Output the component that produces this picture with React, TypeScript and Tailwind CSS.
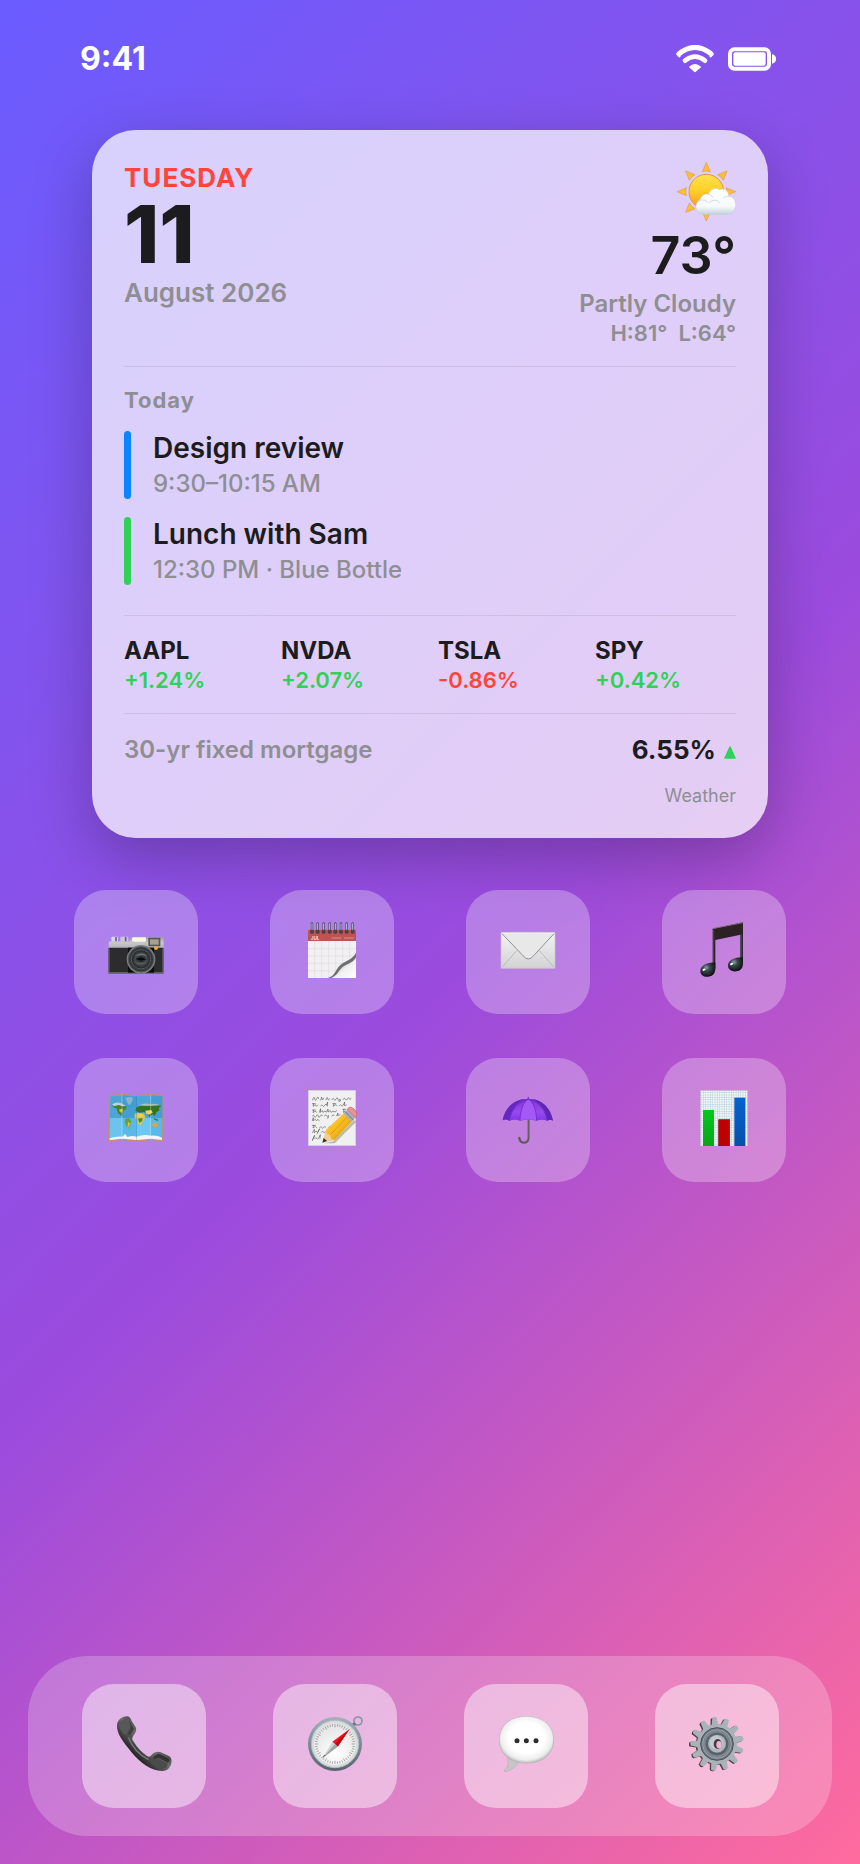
import React from 'react';

interface CalendarEvent {
  title: string;
  detail: string;
  bar: string;
}

interface Stock {
  symbol: string;
  change: string;
}

interface AppShortcut {
  name: string;
  icon: React.ReactNode;
}

const EVENTS: CalendarEvent[] = [
  { title: 'Design review', detail: '9:30–10:15 AM', bar: 'bg-[#0a84ff]' },
  { title: 'Lunch with Sam', detail: '12:30 PM · Blue Bottle', bar: 'bg-[#30d158]' },
];

const STOCKS: Stock[] = [
  { symbol: 'AAPL', change: '+1.24%' },
  { symbol: 'NVDA', change: '+2.07%' },
  { symbol: 'TSLA', change: '-0.86%' },
  { symbol: 'SPY', change: '+0.42%' },
];

const WifiIcon = () => (
  <svg viewBox="0 0 114 84" className="h-7 w-[38px]" fill="none" stroke="#fff" aria-hidden="true">
    <path d="M7 28 Q57 -14 107 28" strokeWidth="15" strokeLinecap="butt" />
    <path d="M4 27 L10 34 M110 27 L104 34" strokeWidth="7" strokeLinecap="round" />
    <path d="M27 47 Q57 23 87 47" strokeWidth="14" strokeLinecap="round" />
    <path d="M57 81 L40 66 Q57 51 74 66 Z" fill="#fff" strokeWidth="3" strokeLinejoin="round" />
  </svg>
);

const BatteryIcon = () => (
  <svg viewBox="0 0 144 72" className="h-6 w-12" aria-hidden="true">
    <rect x="6" y="7" width="117" height="58" rx="13" fill="none" stroke="#fff" strokeWidth="12" />
    <rect x="16" y="16" width="97" height="40" rx="6" fill="#fff" />
    <path d="M132 22 Q144 24 144 36 Q144 48 132 50 Z" fill="#fff" />
  </svg>
);

const PartlyCloudyIcon = () => (
  <svg viewBox="0 0 180 180" className="size-[60px]" aria-hidden="true">
    <defs>
      <linearGradient id="sunBody" x1="0" y1="0" x2="0" y2="1">
        <stop offset="0" stopColor="#ffe24a" />
        <stop offset="0.45" stopColor="#ffd02c" />
        <stop offset="1" stopColor="#f89a1d" />
      </linearGradient>
      <linearGradient id="cloudBody" x1="0" y1="0" x2="0" y2="1">
        <stop offset="0" stopColor="#ffffff" />
        <stop offset="0.7" stopColor="#f6f9fb" />
        <stop offset="1" stopColor="#c4d1da" />
      </linearGradient>
    </defs>
    {[0, 45, 90, 135, 180, 225, 270, 315].map((angle) => (
      <path
        key={angle}
        d="M91 1 L103 29 Q91 25 79 29 Z"
        fill="#fcc02f"
        stroke="#e29a50"
        strokeWidth="2"
        strokeLinejoin="round"
        transform={`rotate(${angle} 91 89)`}
      />
    ))}
    <circle cx="91" cy="89" r="52" fill="url(#sunBody)" stroke="#e9953d" strokeWidth="3" />
    <path
      d="M84 157 C57 157 52 124 72 113 C76 99 88 94 98 97 C102 80 120 75 131 83 C144 77 159 87 158 103 C174 104 181 119 179 133 C177 149 166 157 152 157 Z"
      fill="url(#cloudBody)"
      stroke="#b9c8d2"
      strokeWidth="1.5"
    />
    <path
      d="M66 119 C74 111 88 112 94 121 M100 122 C110 111 126 113 130 122 M98 97 C104 97 108 101 110 106 M142 108 C148 103 154 102 158 103"
      fill="none"
      stroke="#cfdae2"
      strokeWidth="3"
      strokeLinecap="round"
    />
  </svg>
);

const CameraIcon = () => (
  <svg viewBox="0 0 168 168" className="size-14" aria-hidden="true">
    <defs>
      <linearGradient id="cameraPlate" x1="0" y1="0" x2="0" y2="1">
        <stop offset="0" stopColor="#9a9ba2" />
        <stop offset="0.5" stopColor="#c9c9cc" />
        <stop offset="1" stopColor="#b0b0b4" />
      </linearGradient>
      <radialGradient id="cameraLens">
        <stop offset="0" stopColor="#17191b" />
        <stop offset="0.6" stopColor="#454a4e" />
        <stop offset="1" stopColor="#1c1e20" />
      </radialGradient>
    </defs>
    <rect x="10" y="44" width="20" height="18" rx="3" fill="#d8d8e6" />
    <rect x="37" y="44" width="24" height="18" rx="3" fill="#c9c9d8" />
    <path d="M24 45 V60 M53 45 V60" stroke="#6a5a9c" strokeWidth="5" />
    <path d="M2 62 Q2 58 7 58 H64 L70 44 H164 Q167 44 167 48 V80 H2 Z" fill="url(#cameraPlate)" />
    <rect x="1" y="77" width="166" height="78" rx="4" fill="#2c2c2f" />
    <path d="M3 80 V153 M165 80 V153" stroke="#77777c" strokeWidth="3" />
    <path d="M4 153 H164" stroke="#8f8f96" strokeWidth="3" />
    <rect x="60" y="77" width="78" height="75" fill="#0c0c0e" />
    <rect x="72" y="46" width="42" height="13" rx="4" fill="#fbf6e2" />
    <rect x="121" y="47" width="36" height="26" rx="2" fill="#55555a" />
    <rect x="126" y="52" width="26" height="16" fill="#a7a095" />
    <circle cx="144" cy="78" r="6" fill="#ffa51c" />
    <circle cx="99" cy="112" r="43" fill="#7b7e82" />
    <circle cx="99" cy="112" r="38" fill="#34383b" stroke="#54585b" strokeWidth="3" />
    <circle cx="99" cy="112" r="29" fill="url(#cameraLens)" stroke="#565b5e" strokeWidth="3" />
    <path d="M79 103 Q99 87 119 102 Q100 97 79 103 Z" fill="#6c7376" />
    <path d="M76 119 Q98 137 121 118 Q100 125 76 119 Z" fill="#555c5f" />
    <path d="M83 111 Q100 103 115 112 Q100 118 83 111 Z" fill="#090a0b" />
  </svg>
);

const CalendarIcon = () => (
  <svg viewBox="0 0 168 168" className="size-14" aria-hidden="true">
    <defs>
      <linearGradient id="pageCurl" x1="0" y1="0" x2="1" y2="1">
        <stop offset="0.3" stopColor="#b5b5b6" />
        <stop offset="0.55" stopColor="#efefef" />
        <stop offset="1" stopColor="#ffffff" />
      </linearGradient>
      <linearGradient id="curlShadow" x1="0" y1="0" x2="1" y2="1">
        <stop offset="0.25" stopColor="#eceaec" />
        <stop offset="0.5" stopColor="#6f6f72" />
      </linearGradient>
    </defs>
    <rect x="12" y="22" width="144" height="146" fill="#f2f0f2" />
    <rect x="12" y="22" width="144" height="35" fill="#bd5453" />
    <text x="20" y="54" fontSize="14" fontWeight="700" fill="#f3dede">
      JUL
    </text>
    <path d="M82 48 H112 M120 48 H150" stroke="#c87472" strokeWidth="6" />
    <path
      d="M32 57 V168 M53 57 V168 M74 57 V168 M95 57 V168 M116 57 V140 M137 57 V120 M12 80 H156 M12 102 H150 M12 124 H128 M12 146 H112"
      stroke="#dfdce0"
      strokeWidth="2"
    />
    <path d="M72 168 C98 160 94 134 118 122 C140 112 150 104 156 92 V130 L110 168 Z" fill="url(#curlShadow)" />
    <path d="M82 168 C106 158 104 138 126 129 C143 122 151 116 156 106 V168 Z" fill="url(#pageCurl)" />
    {[24, 41, 59, 77, 94, 111, 128, 146].map((x) => (
      <g key={x}>
        <circle cx={x} cy="29" r="6" fill="#48303a" />
        <path d={`M${x} 4 V30`} stroke="#4a4658" strokeWidth="7" strokeLinecap="round" />
        <path d={`M${x} 5 V22`} stroke="#a9cdd6" strokeWidth="3" strokeLinecap="round" />
      </g>
    ))}
  </svg>
);

const MailIcon = () => (
  <svg viewBox="0 0 168 168" className="size-14" aria-hidden="true">
    <defs>
      <linearGradient id="envelope" x1="0" y1="0" x2="0" y2="1">
        <stop offset="0" stopColor="#f3f3f3" />
        <stop offset="1" stopColor="#d3d3d3" />
      </linearGradient>
    </defs>
    <rect x="3" y="31" width="162" height="108" rx="2" fill="url(#envelope)" stroke="#c9c5cd" strokeWidth="2" />
    <path d="M50 86 L6 136 M118 86 L162 136" stroke="#b4b4b4" strokeWidth="2.5" />
    <path
      d="M6 35 L69 101 Q85 121 101 101 L162 35"
      fill="#e8e8e8"
      stroke="#8b9199"
      strokeWidth="3"
      strokeLinejoin="round"
    />
  </svg>
);

const MusicIcon = () => (
  <svg viewBox="0 0 168 168" className="size-14" aria-hidden="true">
    <defs>
      <radialGradient id="noteHead" cx="0.4" cy="0.35" r="0.65">
        <stop offset="0" stopColor="#8d9ca4" />
        <stop offset="0.35" stopColor="#3d4a51" />
        <stop offset="1" stopColor="#0b0e10" />
      </radialGradient>
    </defs>
    <path d="M50 20 L141 1 V37 L58 54 V140 H50 Z" fill="#2c2226" />
    <path d="M133 36 H141 V124 H133 Z" fill="#22262a" />
    <path d="M50 20 L141 2" stroke="#777076" strokeWidth="3" />
    <path d="M53 24 V136 M137 38 V120" stroke="#4d575d" strokeWidth="2" />
    <path d="M58 122 C40 120 13 128 13 147 C13 161 28 168 42 163 C53 160 58 152 58 138 Z" fill="url(#noteHead)" />
    <path d="M141 106 C123 104 96 112 96 130 C96 145 111 151 125 147 C136 144 141 136 141 122 Z" fill="url(#noteHead)" />
    <ellipse cx="24" cy="143" rx="5" ry="3" fill="#fff" transform="rotate(-25 24 143)" />
    <ellipse cx="107" cy="126" rx="5" ry="3" fill="#fff" transform="rotate(-25 107 126)" />
  </svg>
);

const MapIcon = () => (
  <svg viewBox="0 0 168 168" className="size-14" aria-hidden="true">
    <path d="M2 15 L42 12 L85 15 L128 12 L168 15 L166 155 L128 151 L85 155 L42 151 L0 155 Z" fill="#c08f76" />
    <path d="M7 19 L42 16 L85 19 L128 16 L163 19 L162 150 L128 146 L85 150 L42 146 L5 150 Z" fill="#58b9ea" />
    <path d="M7 19 L42 16 V146 L5 150 Z" fill="#6cc4ee" />
    <path d="M85 19 L128 16 V146 L85 150 Z" fill="#6cc8f2" />
    <path d="M7 19 L42 16 L85 19 L128 16 L163 19 V84 H6 Z" fill="#2d84bd" opacity="0.5" />
    <path d="M5 145 Q24 138 42 140 L52 132 L58 141 Q74 136 85 140 Q108 132 128 137 Q148 135 162 143 V150 L128 146 L85 150 L42 146 L5 150 Z" fill="#f4f5f6" />
    <path d="M14 45 Q22 37 32 40 L46 44 L56 50 L52 58 L46 63 L42 74 L50 80 L38 76 L30 70 L26 56 L14 50 Z" fill="#44822c" />
    <path d="M12 43 Q26 34 40 40 L54 48 L44 49 L32 45 L18 49 Z" fill="#bfd0d6" />
    <path d="M34 56 L46 58 L42 68 L35 66 Z" fill="#c9bd48" />
    <path d="M52 24 Q66 18 75 23 L71 38 L64 46 L58 38 Z" fill="#8fb3cb" />
    <path d="M52 86 L62 84 L70 93 L66 105 L60 118 L55 108 L50 96 Z" fill="#6aa134" />
    <path d="M60 96 L67 100 L58 118 Z" fill="#e0c04c" />
    <path d="M86 52 Q100 44 118 48 Q140 40 160 48 L152 54 L155 60 L146 66 L140 78 L134 72 L124 80 L116 70 L108 66 L94 68 L82 62 Z" fill="#35741f" />
    <path d="M80 71 L92 68 L108 71 L112 82 L104 94 L98 107 L90 102 L90 88 L80 84 Z" fill="#dcc74b" />
    <path d="M90 86 L104 84 L102 94 L94 98 Z" fill="#4d8a31" />
    <path d="M112 62 L130 60 L134 68 L122 74 L114 70 Z M90 72 L106 74 L104 80 L88 80 Z" fill="#f0d25b" />
    <path d="M94 46 Q110 37 126 43 Q144 38 156 46 Q140 48 124 47 Q108 48 94 46 Z" fill="#a9c1b8" />
    <path d="M132 102 L142 96 L150 103 L146 113 L134 109 Z" fill="#d9a545" />
    <path d="M138 86 L150 91" stroke="#3f7a2b" strokeWidth="4" />
    <path d="M42 13 V150 M128 13 V150" stroke="#fff" strokeWidth="2" opacity="0.45" />
    <path d="M85 16 V152" stroke="#1f5f8a" strokeWidth="2" opacity="0.4" />
  </svg>
);

const NotesIcon = () => (
  <svg viewBox="0 0 168 168" className="size-14" aria-hidden="true">
    <defs>
      <linearGradient id="pencilBody" x1="0" y1="0" x2="1" y2="1">
        <stop offset="0" stopColor="#ffd83a" />
        <stop offset="0.55" stopColor="#f5b71d" />
        <stop offset="1" stopColor="#a8720d" />
      </linearGradient>
    </defs>
    <rect x="13" y="1" width="142" height="166" fill="#f0f0f0" stroke="#d4d0d4" strokeWidth="2" />
    <g fill="none" stroke="#4a4a4a" strokeWidth="1.7" strokeLinecap="round">
      <path d="M26 30 q4 -14 6 -4 t6 0 t6 0 M50 30 l3 -9 l2 9 l4 -5 M66 29 q3 -12 5 -3 t5 0 M84 29 q4 -8 6 -1 t6 -1 t6 1 t6 -1 q4 8 -2 8 M118 28 q3 -8 6 -1 t6 0 t6 -1 t5 -1" />
      <path d="M25 41 h9 m-5 0 l-2 8 l7 -5 l3 5 l4 -4 M50 48 q4 -7 6 -1 t6 -1 t5 0 l4 -10 l-1 12 M86 41 h9 m-5 0 l-2 8 l7 -5 l4 3 M106 47 q4 -6 6 -1 t6 -1 l4 -9 l-1 11 l6 -2" />
      <path d="M25 60 h9 m-5 0 l-2 8 l7 -5 l3 4 M46 67 l4 -11 l-1 11 l6 -5 l2 5 l6 -4 l4 4 l5 -10 l0 9 l7 -4 l3 5 l5 -4 l6 3 l5 -4 M116 58 h9 m-5 0 l-2 9 l6 -4" />
      <path d="M25 78 q4 -6 6 1 t6 -1 t6 0 t6 0 t6 -1 M62 78 q2 -7 5 -1 t6 -1 q3 9 -3 9 M84 78 q4 -8 6 -1 M98 77 l4 -8 l-1 8 l7 -3 M25 92 l3 -9 l0 9 l6 -4 l3 4 l5 -4 l3 4" />
      <path d="M25 106 h9 m-5 0 l-2 8 l7 -5 l4 4 M47 113 q4 -6 6 -1 t6 0 t6 -1 M74 112 q4 -7 6 -1 M26 128 l5 -10 l0 10 l5 -5 l5 4 l6 -11 l-8 16 M52 127 q4 -7 6 -1 t6 -1 M26 148 l6 -12 l-7 16 M32 146 q4 -7 6 -1 t6 -1 l5 -10 l-1 11" />
    </g>
    <path d="M60 160 L88 154 L150 90 L156 96 L92 160 Z" fill="#7c7660" opacity="0.45" />
    <path d="M55 158 L66 119 L92 150 Z" fill="#f0cf95" />
    <path d="M55 158 L59 144 L69 153 Z" fill="#2b2b2b" />
    <path d="M66 119 L127 63 L150 88 L92 150 L83 148 L77 134 L68 131 Z" fill="url(#pencilBody)" />
    <path d="M79 134 L136 75" stroke="#c98f10" strokeWidth="2" />
    <path d="M118 70 L130 59 L154 83 L142 96 Z" fill="#a8b0b8" />
    <path d="M124 65 L148 90" stroke="#727a84" strokeWidth="3" />
    <path d="M130 59 C132 51 142 49 150 57 C158 65 162 76 154 83 Z" fill="#ef8f96" stroke="#b5626c" strokeWidth="2" />
  </svg>
);

const UmbrellaIcon = () => (
  <svg viewBox="0 0 168 168" className="size-14" aria-hidden="true">
    <defs>
      <linearGradient id="canopy" x1="0" y1="0" x2="0" y2="1">
        <stop offset="0" stopColor="#7a35cc" />
        <stop offset="0.6" stopColor="#9a4af0" />
        <stop offset="1" stopColor="#8136e6" />
      </linearGradient>
    </defs>
    <path d="M85 88 V144 Q84 158 71 158 Q59 157 58 144" fill="none" stroke="#5d5862" strokeWidth="7" strokeLinecap="round" />
    <path d="M83 90 V142 Q82 154 71 155" fill="none" stroke="#a29da8" strokeWidth="2" />
    <path d="M85 20 V30" stroke="#7a4fc0" strokeWidth="4" />
    <path
      d="M8 91 C14 52 44 26 85 26 C124 26 152 52 159 92 Q150 86 142 92 Q126 86 110 92 Q86 86 60 92 Q44 86 28 92 Q18 86 8 91 Z"
      fill="url(#canopy)"
    />
    <path d="M60 91 C61 60 70 36 85 27 C100 36 109 60 110 91 Q86 86 60 91 Z" fill="#a458f6" />
    <path d="M8 91 C14 54 42 30 74 27 C46 42 32 64 28 92 Q18 86 8 91 Z" fill="#6428c0" />
    <path d="M159 92 C152 54 126 30 96 27 C124 42 138 64 142 92 Q150 86 159 92 Z" fill="#5b27b4" />
    <path
      d="M28 92 C34 62 50 38 85 27 M60 92 C61 60 70 36 85 27 M110 92 C109 60 100 36 85 27 M142 92 C136 62 120 38 85 27"
      fill="none"
      stroke="#6425c4"
      strokeWidth="2"
    />
  </svg>
);

const ChartIcon = () => (
  <svg viewBox="0 0 168 168" className="size-14" aria-hidden="true">
    <defs>
      <pattern id="chartGrid" width="7" height="7" patternUnits="userSpaceOnUse">
        <rect width="7" height="7" fill="#f1f6f8" />
        <path d="M0 0 H7 M0 0 V7" stroke="#a9c6d4" strokeWidth="2.4" />
      </pattern>
      <linearGradient id="chartGreen" x1="0" y1="0" x2="0" y2="1">
        <stop offset="0" stopColor="#05c81b" />
        <stop offset="1" stopColor="#08a51a" />
      </linearGradient>
      <linearGradient id="chartBlue" x1="0" y1="0" x2="0" y2="1">
        <stop offset="0" stopColor="#0562cf" />
        <stop offset="1" stopColor="#0650a8" />
      </linearGradient>
    </defs>
    <rect x="13" y="1" width="142" height="167" fill="url(#chartGrid)" stroke="#c0bcc8" strokeWidth="2" />
    <rect x="21" y="60" width="33" height="108" fill="url(#chartGreen)" />
    <rect x="68" y="89" width="33" height="79" fill="#bf0000" stroke="#8f0b10" strokeWidth="2" />
    <rect x="115" y="23" width="33" height="145" fill="url(#chartBlue)" />
  </svg>
);

const PhoneIcon = () => (
  <svg viewBox="0 0 168 168" className="size-14" aria-hidden="true">
    <defs>
      <linearGradient id="handset" x1="0" y1="1" x2="1" y2="0">
        <stop offset="0.3" stopColor="#242424" />
        <stop offset="0.52" stopColor="#6d6d6d" />
        <stop offset="0.72" stopColor="#2b2b2b" />
      </linearGradient>
    </defs>
    <path
      d="M3 28 C3 12 20 0 34 1 C41 2 44 8 47 15 L59 34 C63 43 58 52 52 59 C47 66 48 71 53 77 C65 96 78 110 93 120 C99 124 103 121 107 117 C115 109 124 105 134 109 L160 121 C168 126 168 139 164 148 C159 160 150 166 138 165 C105 164 73 141 46 108 C20 76 2 54 3 28 Z"
      fill="url(#handset)"
    />
    <path d="M9 28 C10 17 24 6 33 8 L43 28 C48 38 39 44 33 53 C26 62 14 48 9 28 Z" fill="#585858" />
    <path d="M37 10 L53 37 C55 43 46 51 40 60 L34 53 C36 46 45 39 43 30 Z" fill="#3f3f3f" />
    <path d="M97 133 C107 131 115 124 123 126 L154 142 C158 148 148 160 138 159 C122 158 110 150 97 133 Z" fill="#4b4b4b" />
    <path d="M110 128 C116 119 124 112 132 115 L157 127 C162 131 160 137 156 140 L126 125 Z" fill="#333" />
    <path d="M38 66 C50 96 72 118 96 130" fill="none" stroke="#7b7b7b" strokeWidth="4" strokeLinecap="round" />
  </svg>
);

const CompassIcon = () => (
  <svg viewBox="0 0 168 168" className="size-14" aria-hidden="true">
    <defs>
      <linearGradient id="compassRim" x1="0" y1="0" x2="0" y2="1">
        <stop offset="0" stopColor="#a3b0bd" />
        <stop offset="1" stopColor="#56636f" />
      </linearGradient>
      <radialGradient id="compassFace" cx="0.5" cy="0.7" r="0.7">
        <stop offset="0" stopColor="#ffffff" />
        <stop offset="1" stopColor="#e2e2e2" />
      </radialGradient>
    </defs>
    <circle cx="153" cy="15" r="12" fill="none" stroke="#8794a6" strokeWidth="5" />
    <path d="M136 30 L144 22" stroke="#657384" strokeWidth="10" />
    <circle cx="84" cy="84" r="81" fill="url(#compassRim)" />
    <circle cx="84" cy="84" r="71" fill="#d9dcdd" stroke="#b3bcc2" strokeWidth="3" />
    <circle cx="84" cy="84" r="63" fill="url(#compassFace)" />
    {Array.from({ length: 48 }, (_, i) => (
      <path
        key={i}
        d={i % 4 === 0 ? 'M84 24 V34' : 'M84 24 V31'}
        stroke="#85898c"
        strokeWidth="2"
        transform={`rotate(${i * 7.5} 84 84)`}
      />
    ))}
    <path d="M128 39 L76 77 L92 92 Z" fill="#ee151f" />
    <path d="M128 39 L84 84 L92 92 Z" fill="#c20710" />
    <path d="M46 127 L76 77 L92 92 Z" fill="#d4d4d4" />
    <path d="M46 127 L84 84 L92 92 Z" fill="#a1a4a5" />
    <path d="M46 127 L51 117 L56 118 Z" fill="#606467" />
  </svg>
);

const MessagesIcon = () => (
  <svg viewBox="0 0 168 168" className="size-14" aria-hidden="true">
    <defs>
      <radialGradient id="bubble" cx="0.5" cy="0.46" r="0.55">
        <stop offset="0.6" stopColor="#ffffff" />
        <stop offset="0.86" stopColor="#eeeeee" />
        <stop offset="1" stopColor="#b7b7b7" />
      </radialGradient>
    </defs>
    <path d="M29 124 C33 145 28 157 18 163 C17 167 22 168 27 166 C44 162 55 150 64 136 Z" fill="#c6c6c6" stroke="#a9a9a9" strokeWidth="1.5" />
    <path
      d="M85 1 C135 1 167 30 167 71 C167 114 135 141 86 141 C36 141 4 115 4 71 C4 30 35 1 85 1 Z"
      fill="url(#bubble)"
      stroke="#b0abb0"
      strokeWidth="1.5"
    />
    <circle cx="57" cy="74" r="7.5" fill="#2e2e2e" />
    <circle cx="85" cy="74" r="7.5" fill="#2e2e2e" />
    <circle cx="114" cy="74" r="7.5" fill="#2e2e2e" />
  </svg>
);

const GEAR_TEETH = Array.from({ length: 13 }, (_, i) => (i * 360) / 13 - 6);

const SettingsIcon = () => (
  <svg viewBox="0 0 168 168" className="size-14" aria-hidden="true">
    <g transform="translate(-4 2)" fill="#4c3f42">
      {GEAR_TEETH.map((angle) => (
        <path key={angle} d="M74 30 L77 6 Q84 1 91 6 L94 30 Z" transform={`rotate(${angle} 84 84)`} />
      ))}
      <circle cx="84" cy="84" r="60" />
    </g>
    <g fill="#a9b1b9">
      {GEAR_TEETH.map((angle) => (
        <path key={angle} d="M73 30 L78 5 Q84 1 91 5 L94 30 Z" transform={`rotate(${angle} 84 84)`} />
      ))}
      <circle cx="84" cy="84" r="60" />
    </g>
    <circle cx="84" cy="84" r="49" fill="#6d767e" stroke="#4a525a" strokeWidth="3" />
    <circle cx="84" cy="84" r="43" fill="#7c868e" stroke="#97a1a9" strokeWidth="3" />
    <circle cx="84" cy="84" r="34" fill="#59626a" />
    <circle cx="84" cy="83" r="27" fill="#aeb6be" />
    <circle cx="82" cy="80" r="20" fill="#c3cad1" />
    <ellipse cx="86" cy="84" rx="12" ry="15" fill="#4b3b44" />
    <ellipse cx="90" cy="86" rx="8" ry="11" fill="#eeb6d2" />
  </svg>
);

const HOME_APPS: AppShortcut[] = [
  { name: 'Camera', icon: <CameraIcon /> },
  { name: 'Calendar', icon: <CalendarIcon /> },
  { name: 'Mail', icon: <MailIcon /> },
  { name: 'Music', icon: <MusicIcon /> },
  { name: 'Maps', icon: <MapIcon /> },
  { name: 'Notes', icon: <NotesIcon /> },
  { name: 'Weather', icon: <UmbrellaIcon /> },
  { name: 'Stocks', icon: <ChartIcon /> },
];

const DOCK_APPS: AppShortcut[] = [
  { name: 'Phone', icon: <PhoneIcon /> },
  { name: 'Browser', icon: <CompassIcon /> },
  { name: 'Messages', icon: <MessagesIcon /> },
  { name: 'Settings', icon: <SettingsIcon /> },
];

const AppButton: React.FC<{ app: AppShortcut; tint: string }> = ({ app, tint }) => (
  <button
    type="button"
    aria-label={app.name}
    className={`flex size-[124px] items-center justify-center rounded-[32px] pb-1 ${tint}`}
  >
    {app.icon}
  </button>
);

const StatusBar = () => (
  <header className="flex items-center justify-between px-20 pt-[39px] text-white">
    <time className="text-[32px] leading-10 font-bold">9:41</time>
    <div className="flex items-center gap-3.5 pr-1">
      <WifiIcon />
      <BatteryIcon />
    </div>
  </header>
);

const SummaryWidget = () => (
  <section className="mx-[92px] mt-[51px] rounded-[44px] bg-white/72 px-8 pt-8 pb-[30px] text-[#1c1c1e] shadow-[0_20px_60px_rgba(0,0,0,0.25)]">
    {/* Date and weather */}
    <div className="flex items-start justify-between pb-[19px]">
      <div>
        <p className="text-[26px] leading-8 font-bold tracking-[1px] text-[#ff453a]">TUESDAY</p>
        <p className="text-[80px] leading-none font-extrabold">11</p>
        <p className="mt-[3px] text-[26px] leading-8 font-semibold text-[#8e8e93]">August 2026</p>
      </div>
      <div className="flex flex-col items-end">
        <PartlyCloudyIcon />
        <p className="mt-2 text-[52px] leading-none font-semibold">73°</p>
        <p className="mt-2 text-2xl leading-7 font-semibold text-[#8e8e93]">Partly Cloudy</p>
        <p className="mt-px text-[22px] leading-7 font-semibold whitespace-pre text-[#8e8e93]">H:81°  L:64°</p>
      </div>
    </div>

    {/* Events */}
    <div className="border-t border-black/8 pt-[19px] pb-[30px]">
      <h2 className="text-[22px] leading-7 font-bold tracking-[1px] text-[#8e8e93]">Today</h2>
      <ul className="mt-[17px] flex flex-col gap-[18px]">
        {EVENTS.map((event) => (
          <li key={event.title} className="flex gap-[22px]">
            <span className={`w-[7px] rounded-full ${event.bar}`} />
            <div>
              <p className="text-[28px] leading-[34px] font-semibold">{event.title}</p>
              <p className="mt-1 text-2xl leading-[30px] font-medium text-[#8e8e93]">{event.detail}</p>
            </div>
          </li>
        ))}
      </ul>
    </div>

    {/* Stocks */}
    <ul className="grid grid-cols-4 gap-4 border-t border-black/8 pt-[21px] pb-[19px]">
      {STOCKS.map((stock) => (
        <li key={stock.symbol}>
          <p className="text-2xl leading-7 font-bold">{stock.symbol}</p>
          <p
            className={`mt-px text-[22px] leading-7 font-semibold ${
              stock.change.startsWith('-') ? 'text-[#ff453a]' : 'text-[#30d158]'
            }`}
          >
            {stock.change}
          </p>
        </li>
      ))}
    </ul>

    {/* Mortgage rate */}
    <div className="flex items-center justify-between border-t border-black/8 pt-5 font-semibold">
      <span className="text-2xl leading-8 text-[#8e8e93]">30-yr fixed mortgage</span>
      <span className="flex items-center gap-2 text-[26px] leading-8 font-bold">
        6.55%
        <svg viewBox="0 0 12 13" className="mt-1 h-[13px] w-3" aria-hidden="true">
          <path d="M6 1 L11 12 H1 Z" fill="#30d158" stroke="#30d158" strokeWidth="1.5" strokeLinejoin="round" />
        </svg>
      </span>
    </div>
    <p className="mt-[18px] text-right text-lg leading-6 text-[#8e8e93]">Weather</p>
  </section>
);

export default function App() {
  return (
    <main className="flex min-h-screen flex-col bg-[linear-gradient(135deg,#6a5cff_0%,#9b4bdd_53%,#ff6b9d_100%)] font-['Inter',sans-serif]">
      <StatusBar />
      <SummaryWidget />
      <div className="mt-[52px] grid grid-cols-4 justify-items-center gap-y-11 px-[38px]">
        {HOME_APPS.map((app) => (
          <AppButton key={app.name} app={app} tint="bg-white/28" />
        ))}
      </div>
      <nav className="mx-7 mt-auto mb-7 flex justify-around rounded-[60px] bg-white/22 px-5 py-7">
        {DOCK_APPS.map((app) => (
          <AppButton key={app.name} app={app} tint="bg-white/45" />
        ))}
      </nav>
    </main>
  );
}
